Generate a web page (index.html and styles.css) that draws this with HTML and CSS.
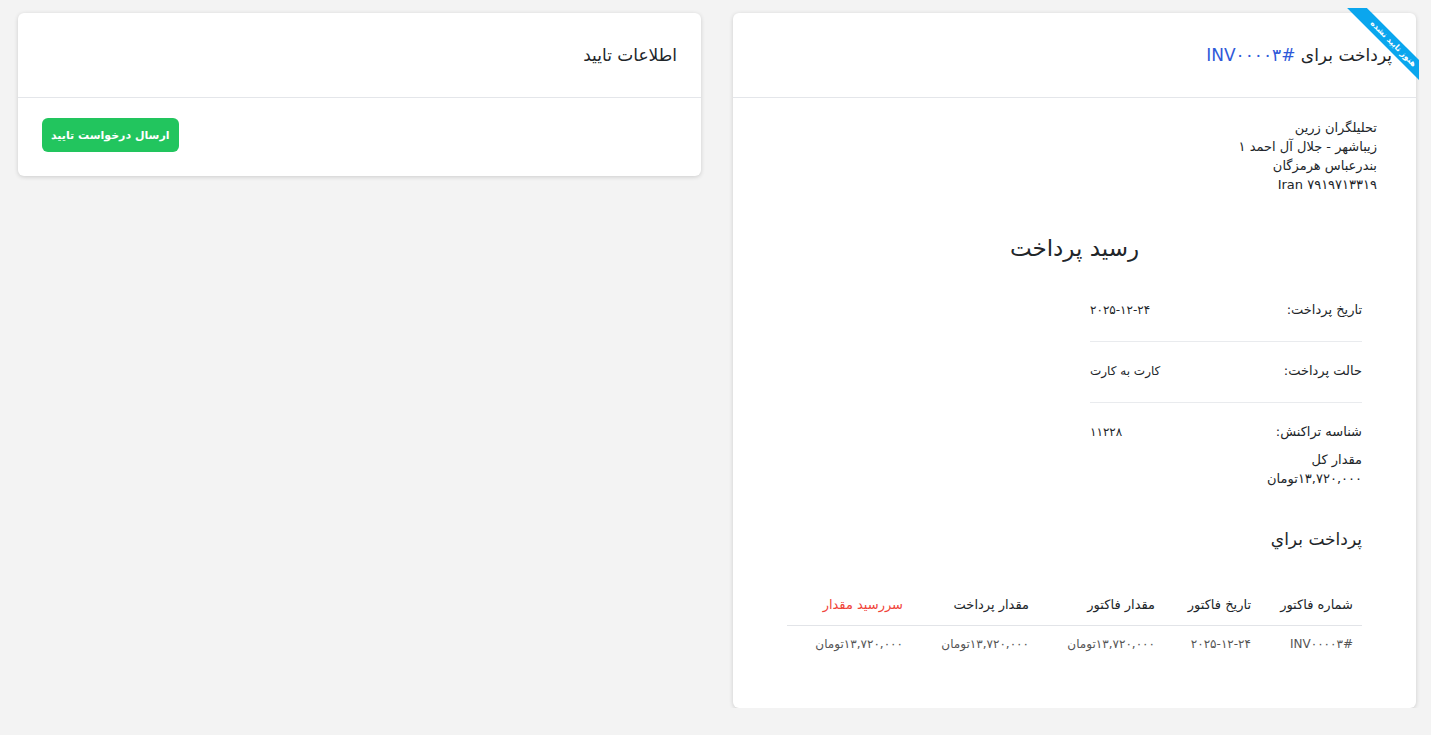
FILE: index.html
```html
<!DOCTYPE html>
<html lang="fa" dir="rtl">
<head>
<meta charset="utf-8">
<title>رسید پرداخت</title>
<link rel="stylesheet" href="styles.css">
</head>
<body>
<div class="page">
  <section class="card card-main">
    <div class="ribbon"><span>هنوز تایید نشده</span></div>
    <header class="card-header">
      <h2 class="card-title">پرداخت برای <span class="inv-link">#INV۰۰۰۰۳</span></h2>
    </header>
    <div class="card-body">
      <div class="inner">
        <address class="address">
          <div class="addr-name">تحلیلگران زرین</div>
          <div>زیباشهر - جلال آل احمد ۱</div>
          <div>بندرعباس هرمزگان</div>
          <div>Iran ۷۹۱۹۷۱۳۳۱۹</div>
        </address>

        <h1 class="receipt-title">رسید پرداخت</h1>

        <div class="content">
          <div class="details">
            <div class="detail-row">
              <span class="detail-label">تاریخ پرداخت:</span>
              <span class="detail-value">۲۰۲۵-۱۲-۲۴</span>
            </div>
            <div class="detail-row">
              <span class="detail-label">حالت پرداخت:</span>
              <span class="detail-value">کارت به کارت</span>
            </div>
            <div class="detail-row detail-last">
              <span class="detail-label">شناسه تراکنش:</span>
              <span class="detail-value">۱۱۲۲۸</span>
            </div>
          </div>
          <div class="total">
            <div class="total-label">مقدار کل</div>
            <div class="total-value">۱۳,۷۲۰,۰۰۰تومان</div>
          </div>

          <h3 class="section-title">پرداخت براي</h3>

          <table class="inv-table">
            <colgroup>
              <col class="c1"><col class="c2"><col class="c3"><col class="c4"><col class="c5">
            </colgroup>
            <thead>
              <tr>
                <th>شماره فاکتور</th>
                <th>تاریخ فاکتور</th>
                <th>مقدار فاکتور</th>
                <th>مقدار پرداخت</th>
                <th class="due">سررسید مقدار</th>
              </tr>
            </thead>
            <tbody>
              <tr>
                <td>#INV۰۰۰۰۳</td>
                <td>۲۰۲۵-۱۲-۲۴</td>
                <td>۱۳,۷۲۰,۰۰۰تومان</td>
                <td>۱۳,۷۲۰,۰۰۰تومان</td>
                <td>۱۳,۷۲۰,۰۰۰تومان</td>
              </tr>
            </tbody>
          </table>
        </div>
      </div>
    </div>
  </section>

  <section class="card card-side">
    <header class="card-header">
      <h2 class="card-title">اطلاعات تایید</h2>
    </header>
    <div class="card-body side-body">
      <button class="btn-green" type="button">ارسال درخواست تایید</button>
    </div>
  </section>
</div>
</body>
</html>
```

FILE: styles.css
```css
* { box-sizing: border-box; }

html, body {
  margin: 0;
  padding: 0;
}

body {
  background: #f3f3f3;
  font-family: "DejaVu Sans", "Noto Sans", sans-serif;
  color: #212529;
  font-size: 13px;
  direction: rtl;
}

.page {
  display: flex;
  align-items: flex-start;
  gap: 32px;
  padding: 13px 15px 0 18px;
}

.card {
  position: relative;
  flex: 0 0 683px;
  background: #fff;
  border-radius: 6px;
  box-shadow: 0 1px 4px rgba(0, 0, 0, 0.16);
}

.card-main {
  min-height: 695px;
}

.card-header {
  height: 85px;
  padding: 0 24px;
  display: flex;
  align-items: center;
  border-bottom: 1px solid #e4e6ea;
}

.card-title {
  margin: 0;
  font-size: 17px;
  font-weight: normal;
  color: #212529;
  line-height: 24px;
}

.inv-link {
  color: #2f59d9;
}

/* ribbon */
.ribbon {
  position: absolute;
  top: -5px;
  right: -3px;
  width: 73px;
  height: 74px;
  overflow: hidden;
}

.ribbon span {
  position: absolute;
  left: -18px;
  top: 29px;
  width: 130px;
  height: 14px;
  line-height: 14px;
  background: #0aa6ee;
  color: #fff;
  font-size: 8px;
  font-weight: bold;
  text-align: center;
  transform: rotate(45deg);
}

.card-body {
  padding: 20px 24px 24px;
}

.inner {
  padding: 0 15px;
}

.address {
  font-style: normal;
  line-height: 19px;
  font-size: 13px;
  color: #212529;
}

.receipt-title {
  margin: 40px 0 0;
  text-align: center;
  font-size: 23px;
  font-weight: normal;
  line-height: 29px;
  color: #212529;
}

.content {
  padding: 0 15px;
}

.details {
  width: 272px;
  margin-top: 18px;
}

.detail-row {
  display: flex;
  justify-content: space-between;
  padding: 19px 0 21px;
  line-height: 20px;
  border-bottom: 1px solid #e9ebee;
}

.detail-row.detail-last {
  border-bottom: 0;
  padding-bottom: 8px;
}

.detail-label {
  font-size: 13px;
}

.detail-value {
  font-size: 12px;
  text-align: left;
}

.total {
  line-height: 19px;
  font-size: 13px;
}

.section-title {
  margin: 39px 0 0;
  font-size: 17px;
  font-weight: normal;
  line-height: 24px;
}

.inv-table {
  width: 100%;
  margin-top: 34px;
  border-collapse: collapse;
  table-layout: fixed;
}

.inv-table col.c1 { width: 102px; }
.inv-table col.c2 { width: 96px; }
.inv-table col.c3 { width: 126px; }
.inv-table col.c4 { width: 126px; }
.inv-table col.c5 { width: 125px; }

.inv-table th {
  text-align: right;
  font-weight: normal;
  font-size: 13px;
  color: #212529;
  padding: 10px 9px;
  line-height: 20px;
  border-bottom: 1px solid #e2e4e8;
  white-space: nowrap;
}

.inv-table th.due {
  color: #f0443a;
}

.inv-table td {
  text-align: right;
  font-size: 12px;
  color: #555;
  padding: 8px 9px;
  line-height: 20px;
  white-space: nowrap;
}

.side-body {
  display: flex;
  justify-content: flex-end;
  padding: 20px 24px 24px;
}

.btn-green {
  display: inline-block;
  height: 34px;
  padding: 0 9px;
  border: 0;
  border-radius: 6px;
  background: #22c55e;
  color: #fff;
  font-family: "DejaVu Sans", "Noto Sans", sans-serif;
  font-size: 11px;
  font-weight: bold;
  cursor: pointer;
}
```
